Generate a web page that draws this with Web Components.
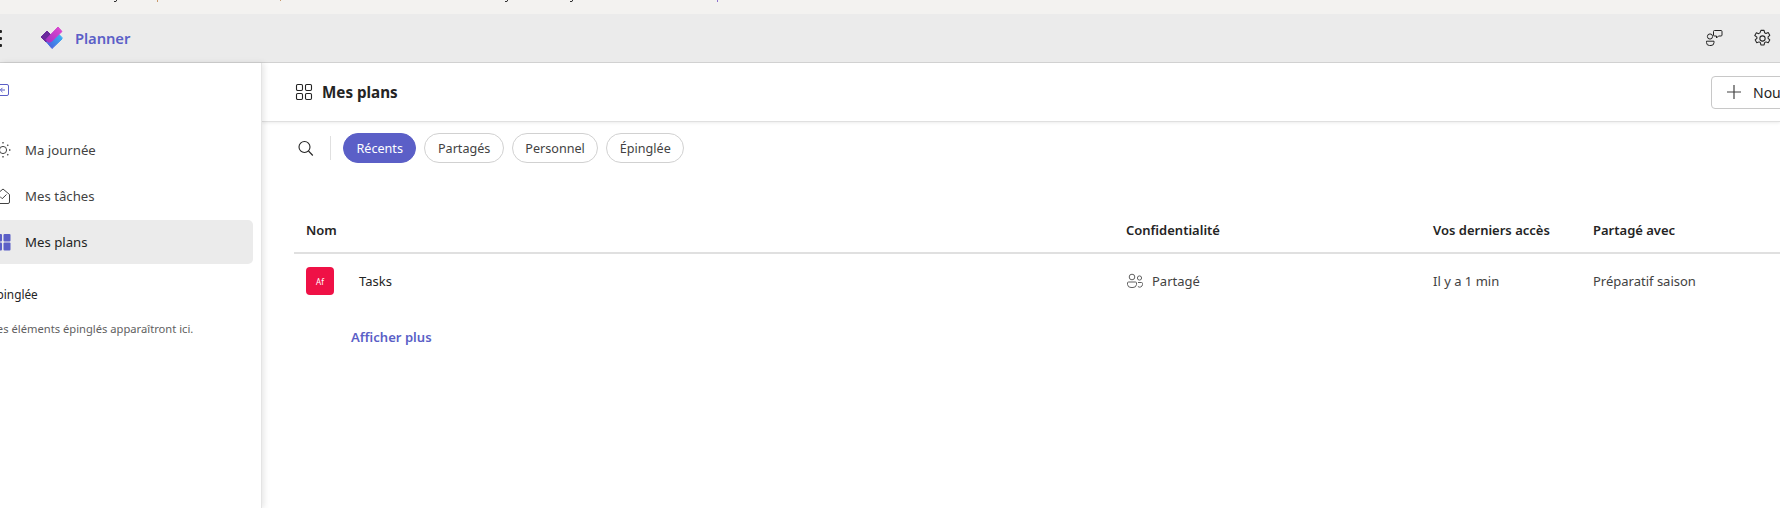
<!DOCTYPE html>
<html lang="fr">
<head>
<meta charset="utf-8">
<title>Planner</title>
<style>
html, body { margin: 0; height: 100%; overflow: hidden; background: #fff; }
body { font-family: "Noto Sans", "Open Sans", sans-serif; font-size: 14px; color: #242424; }
</style>
</head>
<body>
<planner-app>
  <planner-topbar slot="top"></planner-topbar>
  <planner-sidebar slot="side">
    <nav-item label="Ma journée" icon="sun"></nav-item>
    <nav-item label="Mes tâches" icon="task"></nav-item>
    <nav-item label="Mes plans" icon="plans" selected></nav-item>
  </planner-sidebar>
  <plan-page slot="main">
    <filter-chip active>Récents</filter-chip>
    <filter-chip>Partagés</filter-chip>
    <filter-chip>Personnel</filter-chip>
    <filter-chip>Épinglée</filter-chip>
  </plan-page>
</planner-app>

<script>
"use strict";

const ICONS = {
  sun: `<svg width="18" height="18" viewBox="0 0 18 18" fill="none" stroke="#424242" stroke-width="1"><circle cx="9" cy="9" r="3.6"/><path stroke-dasharray="1.4 2.1" stroke-width="1.3" d="M9 1v2M9 15v2M1 9h2M15 9h2M3.3 3.3l1.4 1.4M13.3 13.3l1.4 1.4M3.3 14.7l1.4-1.4M13.3 4.7l1.4-1.4"/></svg>`,
  task: `<svg width="18" height="18" viewBox="0 0 18 18" fill="none" stroke="#424242" stroke-width="1"><path stroke-linejoin="round" d="M2.5 7.5 9 2l6.5 5.5V15a1.5 1.5 0 0 1-1.5 1.5H4A1.5 1.5 0 0 1 2.5 15z"/><path d="m6 9.5 2.2 2.2L12.5 7.5"/></svg>`,
  plans: `<svg width="18" height="18" viewBox="0 0 18 18" fill="#5b5fc7"><rect x="1" y="1" width="7" height="7.5" rx="1"/><rect x="9.5" y="1" width="7" height="7.5" rx="1"/><rect x="1" y="9.5" width="7" height="8" rx="1"/><rect x="9.5" y="9.5" width="7" height="8" rx="1"/></svg>`
};

class PlannerApp extends HTMLElement {
  constructor() {
    super();
    this.attachShadow({ mode: "open" });
    this.shadowRoot.innerHTML = `
<style>
:host { display: grid; width: 1780px; height: 508px; grid-template-rows: 14px 49px 1fr; grid-template-columns: 262px 1fr; overflow: hidden; }
#strip { grid-column: 1 / 3; background: #f3f2f0; line-height: 0; }
#strip svg { display: block; }
#top { grid-column: 1 / 3; display: block; }
</style>
<div id="strip">
  <svg width="900" height="2" fill="none" stroke-width="1">
    <path stroke="#333" d="M114 1.500h2l1-2"/><path stroke="#c99a6c" d="M157.500 0v2"/><path stroke="#c99a6c" d="M280.500 0v1"/>
    <path stroke="#333" d="M505 1.500h2l1-2"/><path stroke="#333" d="M570 1.500h2l1-2"/><path stroke="#8d72cf" d="M717.500 0v2"/>
  </svg>
</div>
<div id="top"><slot name="top"></slot></div>
<slot name="side"></slot>
<slot name="main"></slot>`;
  }
}
customElements.define("planner-app", PlannerApp);

class PlannerTopbar extends HTMLElement {
  constructor() {
    super();
    this.attachShadow({ mode: "open" });
    this.shadowRoot.innerHTML = `
<style>
:host { display: flex; align-items: center; height: 48px; background: #ebebeb; border-bottom: 1px solid #d1d1d1; font-family: "Noto Sans", sans-serif; }
#dots { display: flex; flex-direction: column; gap: 4px; margin-left: -2px; width: 4px; }
#dots i { display: block; width: 4px; height: 3px; background: #242424; border-radius: 1px; }
#logo { display: block; margin-left: 38px; }
#name { margin-left: 11px; font-size: 14.8px; font-weight: 600; color: #5b5fc7; letter-spacing: -.1px; }
#right { margin-left: auto; display: flex; gap: 30px; margin-right: 8px; }
svg { display: block; }
</style>
<div id="dots"><i></i><i></i><i></i></div>
<svg id="logo" width="24" height="26" viewBox="0 0 24 26">
  <defs>
    <linearGradient id="pink" x1="0" y1="1" x2="1" y2="0"><stop offset="0" stop-color="#a52fc4"/><stop offset="1" stop-color="#e04bd0"/></linearGradient>
    <linearGradient id="blue" x1="0" y1="1" x2="1" y2="0"><stop offset="0" stop-color="#4f55dc"/><stop offset="1" stop-color="#35bdf7"/></linearGradient>
  </defs>
  <path fill="#6a2a9c" stroke="#6a2a9c" stroke-linejoin="round" d="M1 12 7 6l5 5-6 6z"/>
  <path fill="url(#blue)" stroke="url(#blue)" stroke-linejoin="round" d="M6.500 17 17 7.500l5 5V14L12 23.500z"/>
  <path fill="url(#pink)" stroke="url(#pink)" stroke-linejoin="round" d="M6 14.500 18 2l4 4.500-10.500 10-3 .8z"/>
</svg>
<span id="name">Planner</span>
<div id="right">
  <svg width="18" height="18" viewBox="0 0 18 18" fill="none" stroke="#242424" stroke-width="1"><circle cx="5" cy="7.5" r="2.6"/><path d="M1.500 12.200h7.500v1.300a3 3 0 0 1-3 3H4.500a3 3 0 0 1-3-3z"/><path stroke-linejoin="round" d="M9.500 1.500h6.500a1 1 0 0 1 1 1v3.500a1 1 0 0 1-1 1h-2.500L11.500 9V7h-2a1 1 0 0 1-1-1V2.500a1 1 0 0 1 1-1z"/></svg>
  <svg width="19" height="19" viewBox="0 0 18 18" fill="none" stroke="#242424" stroke-width="1"><circle cx="9" cy="9" r="2.5"/><path stroke-linejoin="round" d="M7.500 1.300h3l.5 2.200 1.300.7 2.100-.8 1.500 2.600-1.600 1.500v1.400l1.600 1.500-1.500 2.600-2.100-.8-1.300.7-.5 2.200h-3l-.5-2.200-1.300-.7-2.100.8-1.500-2.600 1.600-1.500V7.700L1.700 6.200l1.500-2.600 2.100.8 1.300-.7z"/></svg>
</div>`;
  }
}
customElements.define("planner-topbar", PlannerTopbar);

class NavItem extends HTMLElement {
  connectedCallback() {
    if (this.shadowRoot) return;
    this.attachShadow({ mode: "open" });
    this.shadowRoot.innerHTML = `
<style>
:host { display: flex; align-items: center; height: 44px; width: 265px; margin-left: -12px; padding-left: 6px; box-sizing: border-box; gap: 13px; border-radius: 0 5px 5px 0; font-size: 13.2px; color: #424242; }
:host([selected]) { background: #ebebeb; color: #242424; }
svg { display: block; }
</style>
${ICONS[this.getAttribute("icon")] || ""}
<span>${this.getAttribute("label")}</span>`;
  }
}
customElements.define("nav-item", NavItem);

class PlannerSidebar extends HTMLElement {
  constructor() {
    super();
    this.attachShadow({ mode: "open" });
    this.shadowRoot.innerHTML = `
<style>
:host { display: block; position: relative; z-index: 1; background: #fff; box-shadow: 2px 0 6px rgba(0,0,0,.10); border-right: 1px solid #e4e4e4; overflow: hidden; box-sizing: border-box; width: 262px; font-family: "Noto Sans", sans-serif; }
#collapse { display: block; margin: 21px 0 0 -6px; }
#nav { margin-top: 32px; display: flex; flex-direction: column; gap: 2px; }
#pinned { margin: 21px 0 0 -10px; font-size: 11.8px; color: #242424; line-height: 18px; }
#hint { margin: 17px 0 0 -9px; font-size: 11.2px; color: #616161; line-height: 18px; white-space: nowrap; }
</style>
<svg id="collapse" width="15" height="12" viewBox="0 0 15 12" fill="none" stroke="#5b5fc7" stroke-width="1"><rect x="3.5" y=".5" width="11" height="11" rx="1.5"/><path d="M11 6H6.500M8.500 3.800 6.300 6l2.200 2.200"/></svg>
<div id="nav"><slot></slot></div>
<div id="pinned">Épinglée</div>
<div id="hint">Les éléments épinglés apparaîtront ici.</div>`;
  }
}
customElements.define("planner-sidebar", PlannerSidebar);

class FilterChip extends HTMLElement {
  constructor() {
    super();
    this.attachShadow({ mode: "open" });
    this.shadowRoot.innerHTML = `
<style>
:host { display: flex; align-items: center; height: 30px; box-sizing: border-box; padding: 0 12.5px; border: 1px solid #d1d1d1; border-radius: 15px; font-size: 12.6px; color: #424242; background: #fff; }
:host([active]) { background: #5b5fc7; border-color: #5b5fc7; color: #fff; }
</style>
<slot></slot>`;
  }
}
customElements.define("filter-chip", FilterChip);

class PlanPage extends HTMLElement {
  constructor() {
    super();
    this.attachShadow({ mode: "open" });
    this.shadowRoot.innerHTML = `
<style>
:host { display: block; min-width: 0; overflow: hidden; font-family: "Noto Sans", sans-serif; }
svg { display: block; flex: none; }
header { display: flex; align-items: center; height: 59px; box-sizing: border-box; padding-left: 33px; border-bottom: 1px solid #e0e0e0; box-shadow: 0 1px 3px rgba(0,0,0,.08); }
h1 { margin: 0 0 0 9px; font-size: 15.2px; font-weight: 700; color: #242424; }
#new { display: flex; align-items: center; gap: 11px; margin-left: auto; width: 90px; flex: none; height: 33px; box-sizing: border-box; margin-right: -21px; padding-left: 14px; border: 1px solid #c8c8c8; border-radius: 4px; background: #fff; font-size: 14px; color: #242424; white-space: nowrap; overflow: hidden; }
#filters { display: flex; align-items: center; height: 30px; margin-top: 11px; padding-left: 35px; }
#sep { width: 1px; height: 24px; background: #e0e0e0; margin: 0 12px 0 16px; }
#chips { display: flex; gap: 8px; }
.row { display: grid; grid-template-columns: 832px 307px 160px 1fr; margin-left: 32px; align-items: center; }
.row > div { padding-left: 12px; min-width: 0; }
.row > div + div { padding-left: 0; }
#head { margin-top: 45px; height: 31px; padding-top: 6px; padding-bottom: 7px; border-bottom: 2px solid #e0e0e0; font-size: 13px; font-weight: 600; color: #242424; }
#item { height: 54px; font-size: 13px; color: #424242; }
#name { display: flex; align-items: center; gap: 25px; color: #242424; }
#badge { display: flex; align-items: center; justify-content: center; width: 28px; height: 28px; border-radius: 4px; background: #ef1146; color: #fff; font-size: 8px; }
#priv { display: flex; align-items: center; gap: 8px; }
#more { margin: 20px 0 0 89px; font-size: 13.1px; font-weight: 600; color: #5b5fc7; }
</style>
<header>
  <svg width="18" height="18" viewBox="0 0 18 18" fill="none" stroke="#242424" stroke-width="1.1"><rect x="1.5" y="1.5" width="6" height="6" rx="1.2"/><rect x="10.5" y="1.5" width="6" height="6" rx="1.2"/><rect x="1.5" y="10.5" width="6" height="6" rx="1.2"/><rect x="10.5" y="10.5" width="6" height="6" rx="1.2"/></svg>
  <h1>Mes plans</h1>
  <div id="new"><svg width="16" height="16" viewBox="0 0 16 16" stroke="#424242" stroke-width="1.2"><path d="M8 1v14M1 8h14"/></svg><span>Nouveau</span></div>
</header>
<div id="filters">
  <svg width="17" height="17" viewBox="0 0 17 17" fill="none" stroke="#242424" stroke-width="1.1"><circle cx="7.5" cy="7" r="5.5"/><path d="m11.500 11 4.300 4.500"/></svg>
  <div id="sep"></div>
  <div id="chips"><slot></slot></div>
</div>
<div class="row" id="head"><div>Nom</div><div>Confidentialité</div><div>Vos derniers accès</div><div>Partagé avec</div></div>
<div class="row" id="item">
  <div id="name"><div id="badge">Af</div><span>Tasks</span></div>
  <div id="priv">
    <svg width="18" height="16" viewBox="0 0 18 16" fill="none" stroke="#616161" stroke-width="1"><circle cx="6" cy="4" r="2.8"/><circle cx="13.5" cy="5" r="2.1"/><path d="M1.500 10a1 1 0 0 1 1-1h7a1 1 0 0 1 1 1v1.500a3.500 3.500 0 0 1-3.500 3H5a3.500 3.500 0 0 1-3.500-3z"/><path d="M12 9.500h3.500a1 1 0 0 1 1 1v1a2.800 2.800 0 0 1-4.600 2"/></svg>
    <span>Partagé</span>
  </div>
  <div>Il y a 1 min</div>
  <div>Préparatif saison</div>
</div>
<div id="more">Afficher plus</div>`;
  }
}
customElements.define("plan-page", PlanPage);
</script>
</body>
</html>
